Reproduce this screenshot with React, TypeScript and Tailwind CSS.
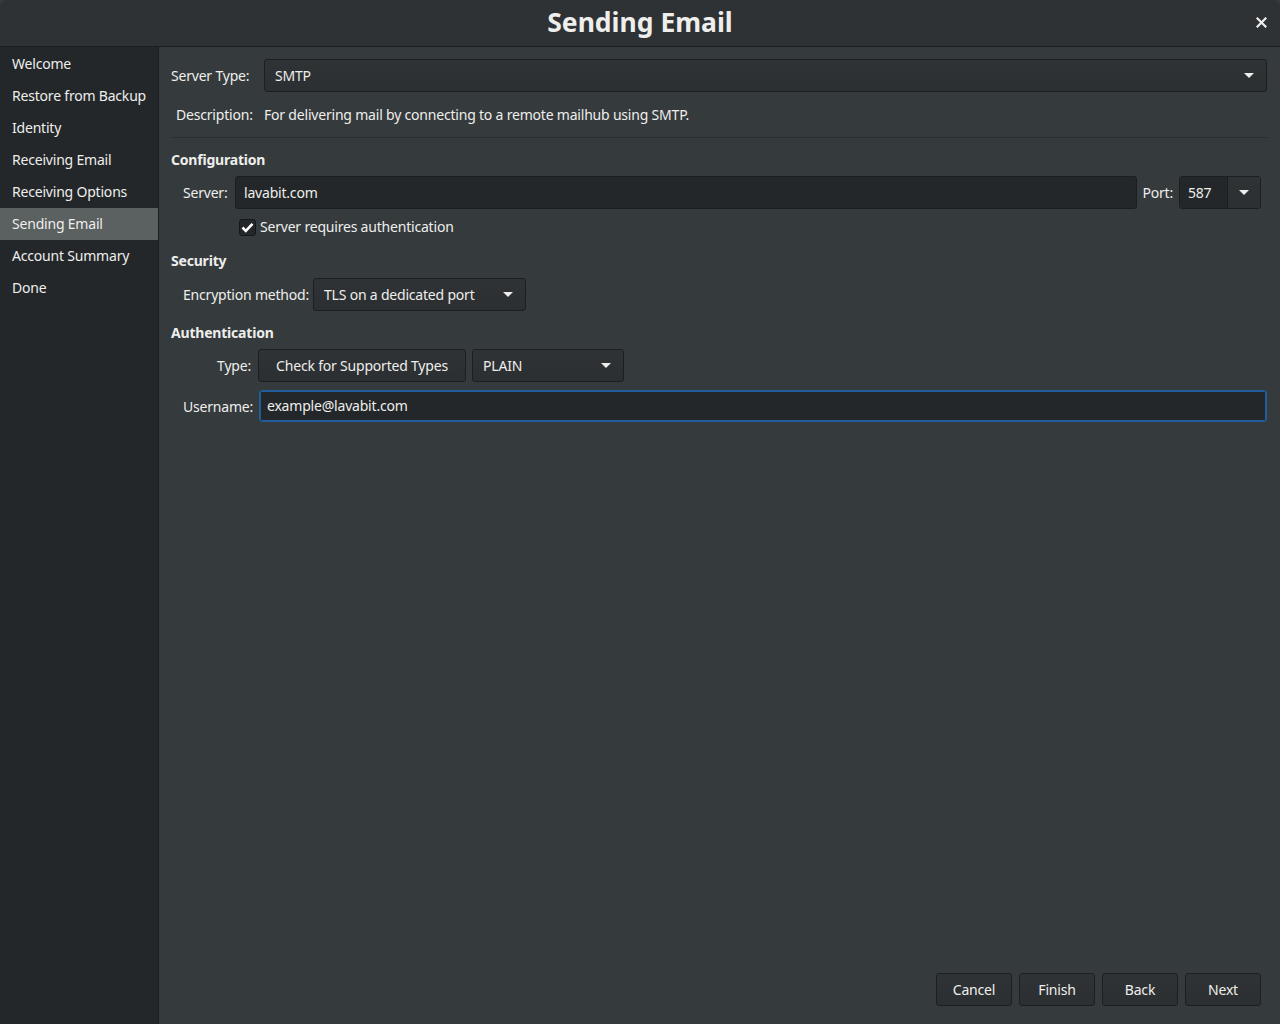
import React from 'react';

const font = { fontFamily: '"Noto Sans", "Open Sans", sans-serif' };

const steps = [
  'Welcome',
  'Restore from Backup',
  'Identity',
  'Receiving Email',
  'Receiving Options',
  'Sending Email',
  'Account Summary',
  'Done',
];

const Caret = () => (
  <svg width="12" height="7" viewBox="0 0 12 7" className="shrink-0">
    <path d="M1 1h10L6 6z" fill="#eeeeec" />
  </svg>
);

const Combo = ({ value, className = '' }: { value: string; className?: string }) => (
  <div
    className={`flex items-center justify-between h-[33px] pl-[10px] pr-[11px] pb-[1px] rounded-[3px] border border-[#1c1f1f] bg-gradient-to-b from-[#2f3335] to-[#2b2f31] text-[#eeeeec] whitespace-nowrap ${className}`}
  >
    <span>{value}</span>
    <Caret />
  </div>
);

const Button = ({ label, className = '' }: { label: string; className?: string }) => (
  <div
    className={`flex items-center justify-center h-[33px] pb-[1px] rounded-[3px] border border-[#1c1f1f] bg-gradient-to-b from-[#2f3335] to-[#2b2f31] text-[#eeeeec] whitespace-nowrap ${className}`}
  >
    {label}
  </div>
);

export default function App() {
  return (
    <div className="w-[1280px] h-[1024px] flex flex-col bg-[#353a3c] text-[#eeeeec] text-[14px] tracking-[-0.2px] overflow-hidden" style={font}>
      {/* header bar */}
      <div className="relative h-[47px] shrink-0 flex items-center justify-center bg-[#2e3235] border-b border-[#1b1e1f] rounded-t-[7px]">
        <span className="text-[26.5px] font-bold text-[#eeeeec] tracking-normal">Sending Email</span>
        <span className="absolute right-[13px] top-[17px]">
          <svg width="11" height="11" viewBox="0 0 11 11">
            <path d="M1.5 1.5l8 8M9.5 1.5l-8 8" stroke="#eeeeec" strokeWidth="2.2" strokeLinecap="square" />
          </svg>
        </span>
      </div>

      <div className="flex flex-1 min-h-0">
        {/* sidebar */}
        <div className="w-[159px] shrink-0 bg-[#232729] border-r border-[#1b1e1f] pt-[1px]">
          {steps.map((s) => (
            <div
              key={s}
              className={`h-[32px] flex items-center pl-[12px] pb-[2px] whitespace-nowrap ${s === 'Sending Email' ? 'bg-[#5b6061]' : ''}`}
            >
              {s}
            </div>
          ))}
        </div>

        {/* main */}
        <div className="flex-1 flex flex-col pl-[12px] pr-[13px] pt-[12px] pb-[18px] whitespace-nowrap">
          <div className="flex items-center">
            <span className="w-[93px] shrink-0">Server Type:</span>
            <Combo value="SMTP" className="flex-1" />
          </div>
          <div className="flex items-center h-[22px] mt-[11px]">
            <span className="w-[93px] shrink-0 pl-[5px]">Description:</span>
            <span>For delivering mail by connecting to a remote mailhub using SMTP.</span>
          </div>
          <div className="h-px bg-[#2a2e30] mt-[12px]" />

          <div className="font-bold mt-[11px] h-[20px] flex items-center">Configuration</div>
          <div className="flex items-center mt-[7px] pr-[6px]">
            <span className="w-[64px] shrink-0 pl-[12px]">Server:</span>
            <div className="flex-1 h-[33px] flex items-center pl-[8px] pb-[1px] rounded-[3px] border border-[#1c1f1f] bg-[#232729]">
              lavabit.com
            </div>
            <span className="ml-[5px] mr-[6px]">Port:</span>
            <div className="flex h-[33px] rounded-[3px] border border-[#1c1f1f] overflow-hidden">
              <div className="w-[48px] flex items-center pl-[8px] pb-[1px] bg-[#232729] border-r border-[#1c1f1f]">587</div>
              <div className="w-[32px] flex items-center justify-center bg-gradient-to-b from-[#2f3335] to-[#2b2f31]">
                <Caret />
              </div>
            </div>
          </div>
          <div className="flex items-center mt-[8px] ml-[68px] h-[20px]">
            <div className="w-[17px] h-[17px] rounded-[3px] border border-[#15181a] bg-[#232729] flex items-center justify-center">
              <svg width="13" height="11" viewBox="0 0 13 11">
                <path d="M1.5 5.5l3.3 3.3 6.7-7" stroke="#ffffff" strokeWidth="2.6" fill="none" />
              </svg>
            </div>
            <span className="ml-[4px] pb-[1px]">Server requires authentication</span>
          </div>

          <div className="font-bold mt-[13px] h-[20px] flex items-center">Security</div>
          <div className="flex items-center mt-[8px]">
            <span className="pl-[12px] w-[142px] shrink-0">Encryption method:</span>
            <Combo value="TLS on a dedicated port" className="w-[213px]" />
          </div>

          <div className="font-bold mt-[11px] h-[20px] flex items-center">Authentication</div>
          <div className="flex items-center mt-[7px]">
            <span className="w-[87px] shrink-0 text-right pr-[7px]">Type:</span>
            <Button label="Check for Supported Types" className="w-[208px]" />
            <Combo value="PLAIN" className="w-[152px] ml-[6px]" />
          </div>
          <div className="flex items-center mt-[8px]">
            <span className="w-[88px] shrink-0 pl-[12px]">Username:</span>
            <div className="flex-1 h-[32px] flex items-center pl-[7px] pb-[1px] rounded-[3px] border border-[#215d9c] bg-[#232729] shadow-[inset_0_0_0_1px_#215d9c]">
              example@lavabit.com
            </div>
          </div>

          <div className="flex-1" />

          <div className="flex justify-end gap-[7px] pr-[6px]">
            <Button label="Cancel" className="w-[76px]" />
            <Button label="Finish" className="w-[76px]" />
            <Button label="Back" className="w-[76px]" />
            <Button label="Next" className="w-[76px]" />
          </div>
        </div>
      </div>
    </div>
  );
}
